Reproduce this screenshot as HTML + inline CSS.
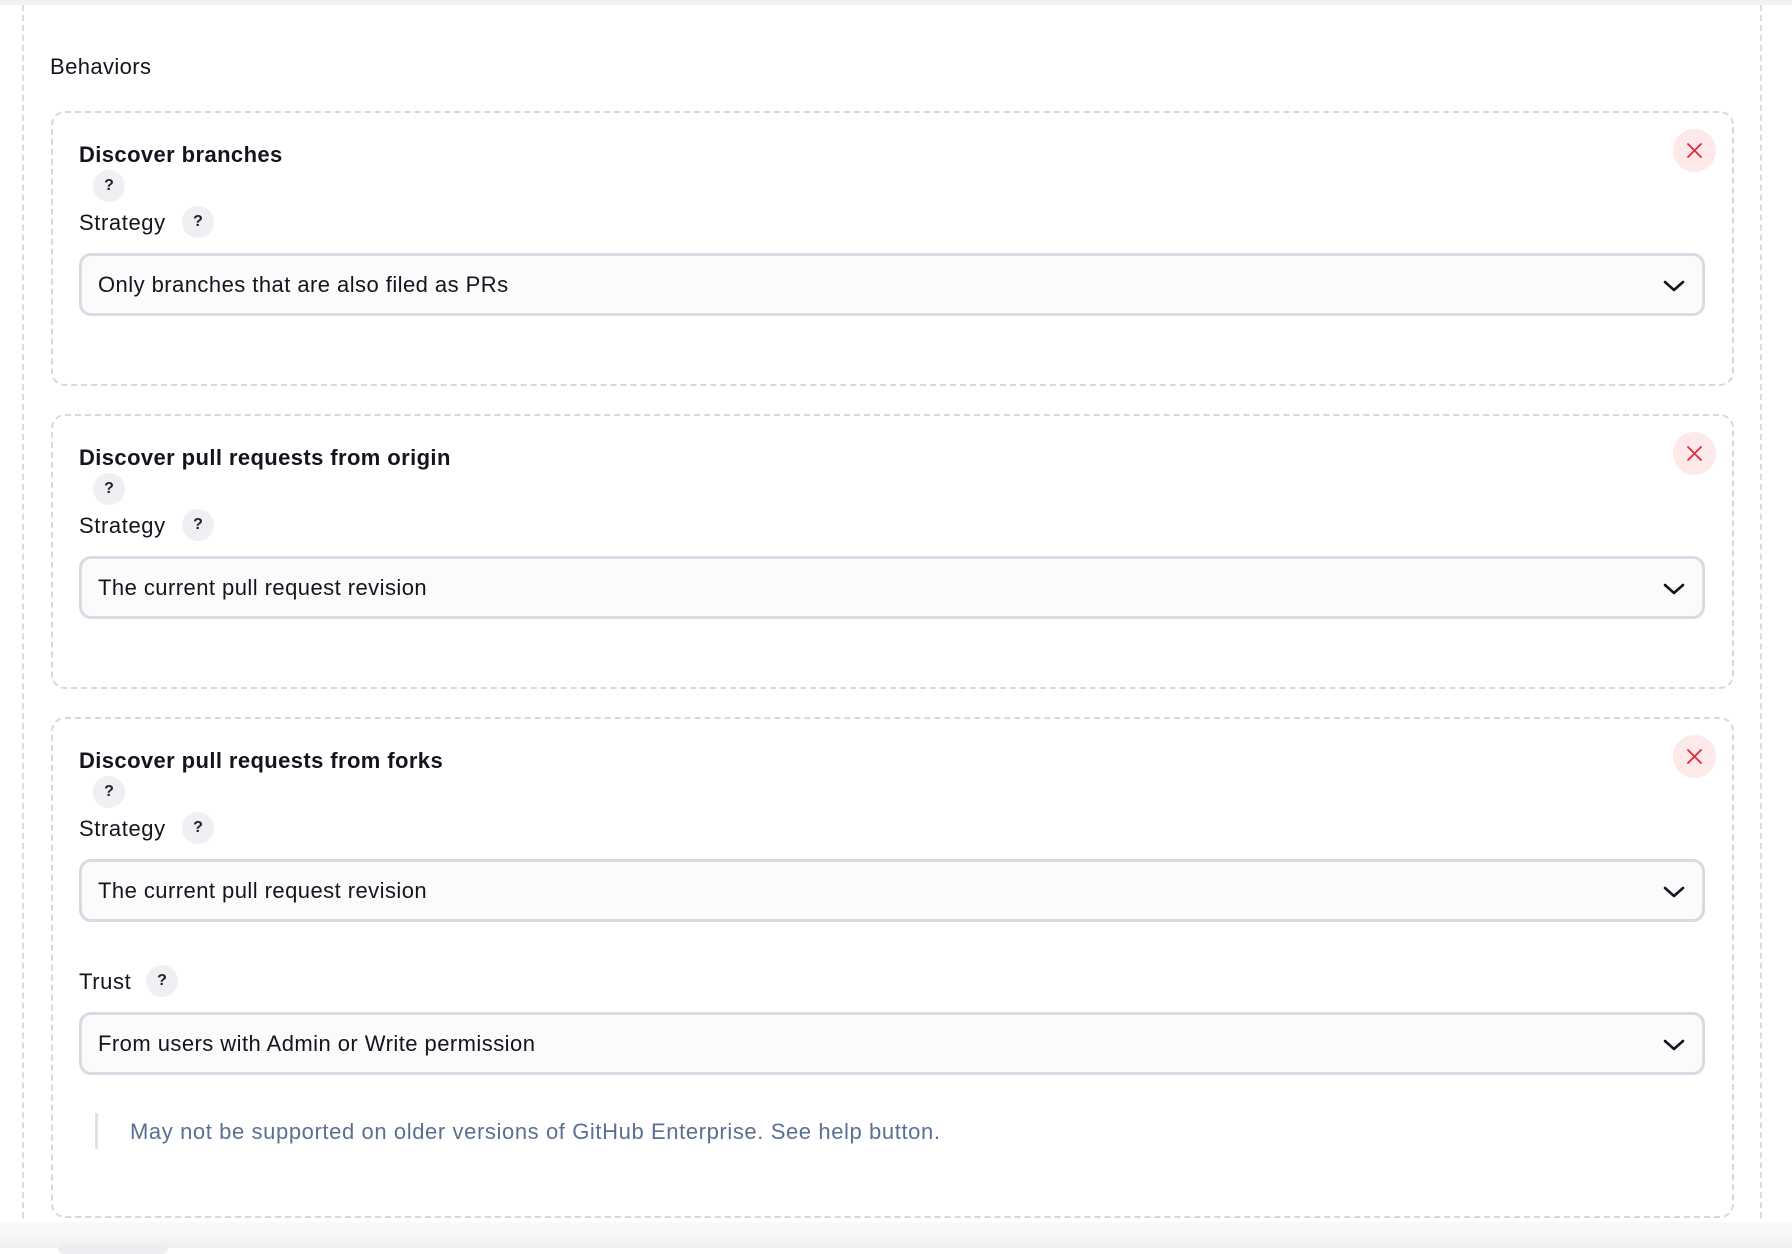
<!DOCTYPE html>
<html><head><style>
*{box-sizing:border-box;margin:0;padding:0}
body{width:1792px;height:1248px;background:#fff;position:relative;overflow:hidden;font-family:"Liberation Sans",sans-serif;color:#14141f}
.top{position:absolute;left:0;top:0;width:1792px;height:5px;background:#f2f2f4}
.vl{position:absolute;top:5px;height:1243px;border-left:2px dashed #d6dbe4}
.bottom{position:absolute;left:0;top:1222px;width:1792px;height:26px;background:linear-gradient(#fafafb,#f1f1f3)}
.a{position:absolute}
.card{position:absolute;left:51px;width:1683px;border:2px dashed #d3d9e2;border-radius:14px;background:#fff}
.title{position:absolute;left:79px;font-size:22px;font-weight:bold;line-height:26px;letter-spacing:0.4px}
.lbl{position:absolute;left:79px;font-size:22px;line-height:26px;letter-spacing:0.6px}
.q{position:absolute;width:32px;height:32px;border-radius:50%;background:#eef0f3;font-size:16px;font-weight:bold;text-align:center;line-height:32px;color:#222}
.sel{position:absolute;left:79px;width:1626px;height:63px;border:3px solid #d6dbe4;border-radius:12px;background:#fbfbfc;font-size:22px;line-height:58px;padding-left:16px;letter-spacing:0.45px}
.sel svg{position:absolute;right:16px;top:18px}
.x{position:absolute;left:1673px;width:43px;height:43px;border-radius:50%;background:#fde8ea}
.x svg{position:absolute;left:13px;top:13px}
</style></head><body>
<div class="top"></div>
<div class="vl" style="left:22px"></div>
<div class="vl" style="left:1760px"></div>
<div class="bottom"></div>
<div class="a" style="left:50px;top:54px;font-size:22px;line-height:26px;letter-spacing:0.4px">Behaviors</div>

<div class="card" style="top:111px;height:275px"></div>
<div class="card" style="top:414px;height:275px"></div>
<div class="card" style="top:717px;height:501px"></div>

<div class="title" style="top:142px">Discover branches</div>
<div class="q" style="left:93px;top:170px">?</div>
<div class="lbl" style="top:210px">Strategy</div>
<div class="q" style="left:182px;top:206px">?</div>
<div class="sel" style="top:253px">Only branches that are also filed as PRs<svg width="24" height="24" viewBox="0 0 24 24"><path d="M3 8l9 8 9-8" fill="none" stroke="#14141f" stroke-width="2.6" stroke-linecap="round" stroke-linejoin="round"/></svg></div>
<div class="x" style="top:129px"><svg width="17" height="17" viewBox="0 0 17 17"><path d="M2 2l13 13M15 2L2 15" stroke="#e5283b" stroke-width="1.8" stroke-linecap="round"/></svg></div>

<div class="title" style="top:445px">Discover pull requests from origin</div>
<div class="q" style="left:93px;top:473px">?</div>
<div class="lbl" style="top:513px">Strategy</div>
<div class="q" style="left:182px;top:509px">?</div>
<div class="sel" style="top:556px">The current pull request revision<svg width="24" height="24" viewBox="0 0 24 24"><path d="M3 8l9 8 9-8" fill="none" stroke="#14141f" stroke-width="2.6" stroke-linecap="round" stroke-linejoin="round"/></svg></div>
<div class="x" style="top:432px"><svg width="17" height="17" viewBox="0 0 17 17"><path d="M2 2l13 13M15 2L2 15" stroke="#e5283b" stroke-width="1.8" stroke-linecap="round"/></svg></div>

<div class="title" style="top:748px">Discover pull requests from forks</div>
<div class="q" style="left:93px;top:776px">?</div>
<div class="lbl" style="top:816px">Strategy</div>
<div class="q" style="left:182px;top:812px">?</div>
<div class="sel" style="top:859px">The current pull request revision<svg width="24" height="24" viewBox="0 0 24 24"><path d="M3 8l9 8 9-8" fill="none" stroke="#14141f" stroke-width="2.6" stroke-linecap="round" stroke-linejoin="round"/></svg></div>
<div class="x" style="top:735px"><svg width="17" height="17" viewBox="0 0 17 17"><path d="M2 2l13 13M15 2L2 15" stroke="#e5283b" stroke-width="1.8" stroke-linecap="round"/></svg></div>
<div class="lbl" style="top:969px">Trust</div>
<div class="q" style="left:146px;top:965px">?</div>
<div class="sel" style="top:1012px">From users with Admin or Write permission<svg width="24" height="24" viewBox="0 0 24 24"><path d="M3 8l9 8 9-8" fill="none" stroke="#14141f" stroke-width="2.6" stroke-linecap="round" stroke-linejoin="round"/></svg></div>
<div class="a" style="left:95px;top:1113px;width:3px;height:36px;background:#dde1e8"></div>
<div class="a" style="left:130px;top:1119px;font-size:22px;line-height:26px;color:#5a7092;letter-spacing:0.6px">May not be supported on older versions of GitHub Enterprise. See help button.</div>
<div class="a" style="left:58px;top:1244px;width:110px;height:10px;border-radius:6px;background:#eceef1"></div>
</body></html>
